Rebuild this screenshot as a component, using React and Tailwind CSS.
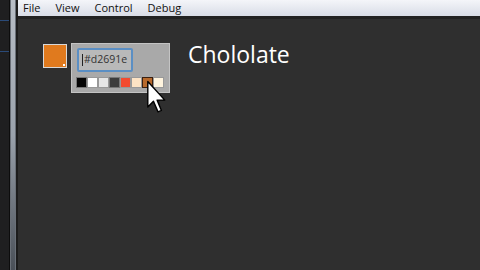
// Color picker mock inside a dark editor window
const swatches = [
  { c: 'bg-[#050505]', b: 'border-[#777]' },
  { c: 'bg-[#ffffff]', b: 'border-[#999]' },
  { c: 'bg-[#e6e6e6]', b: 'border-[#999]' },
  { c: 'bg-[#3c3c3c]', b: 'border-[#777]' },
  { c: 'bg-[#f24b30]', b: 'border-[#999]' },
  { c: 'bg-[#fde3c4]', b: 'border-[#999]' },
  { c: 'bg-[#b86a2c]', b: 'border-[#3a2010]' },
  { c: 'bg-[#fff4de]', b: 'border-[#999]' },
];

function Cursor() {
  return (
    <svg className="absolute left-[74px] top-[36px]" width="22" height="34" viewBox="0 0 15 24">
      <path d="M1 1 L1 19 L5 15 L8.2 22.5 L10.6 21.5 L7.6 14.2 L13 14.2 Z" fill="#fff" stroke="#000" strokeWidth="1" strokeLinejoin="round" />
    </svg>
  );
}

export default function App() {
  return (
    <div className="w-[480px] h-[270px] flex bg-[#2f2f2f] overflow-hidden" style={{ fontFamily: '"Open Sans", "Noto Sans", sans-serif' }}>
      {/* desktop behind */}
      <div className="w-[9px] bg-[#1f1f20] flex flex-col">
        <div className="h-[20px]" />
        <div className="h-[1px] bg-[#2a4a78]" />
        <div className="h-[30px]" />
        <div className="h-[1px] bg-[#2a4a78]" />
      </div>
      {/* window frame */}
      <div className="w-[9px] flex">
        <div className="w-[1px] bg-[#0c0c0c]" />
        <div className="w-[6px] bg-gradient-to-b from-[#b8bec6] via-[#9aa2ac] to-[#4a5058] border-x border-[#6a7078]" />
        <div className="w-[2px] bg-[#1c1c1c]" />
      </div>
      <div className="flex-1 flex flex-col">
        <div className="h-[16px] bg-gradient-to-b from-[#f4f5f9] to-[#d9dde7] flex items-center gap-[15px] pl-[5px] text-[11px] text-[#111]">
          <span>File</span>
          <span>View</span>
          <span>Control</span>
          <span>Debug</span>
        </div>
        <div className="h-[3px] bg-[#222]" />
        <div className="flex-1 flex items-start">
          <div className="ml-[25px] mt-[25px] w-[24px] h-[24px] border border-[#d8d8d8] bg-[#e07a1e] relative">
            <div className="absolute right-[1px] bottom-[1px] w-[2px] h-[2px] bg-white" />
          </div>
          <div className="relative ml-[4px] mt-[24px] w-[99px] h-[50px] bg-[#a9a9a9] border border-[#c4c4c4] px-[4px] pt-[4px]">
            <div className="ml-[1px] w-[56px] h-[24px] border-2 border-[#5b8fc4] rounded-[2px] bg-[#b9b9b9] flex items-center pl-[3px] text-[10.5px] text-[#333]">
              <span className="w-[1px] h-[12px] bg-[#222] mr-[1px]" />
              <span>#d2691e</span>
            </div>
            <div className="mt-[5px] flex">
              {swatches.map((s, i) => (
                <div key={i} className={`w-[11px] h-[11px] border ${s.b} ${s.c}`} />
              ))}
            </div>
            <Cursor />
          </div>
          <div className="ml-[18px] mt-[24px] text-[23px] text-white leading-none">Chololate</div>
        </div>
      </div>
    </div>
  );
}
